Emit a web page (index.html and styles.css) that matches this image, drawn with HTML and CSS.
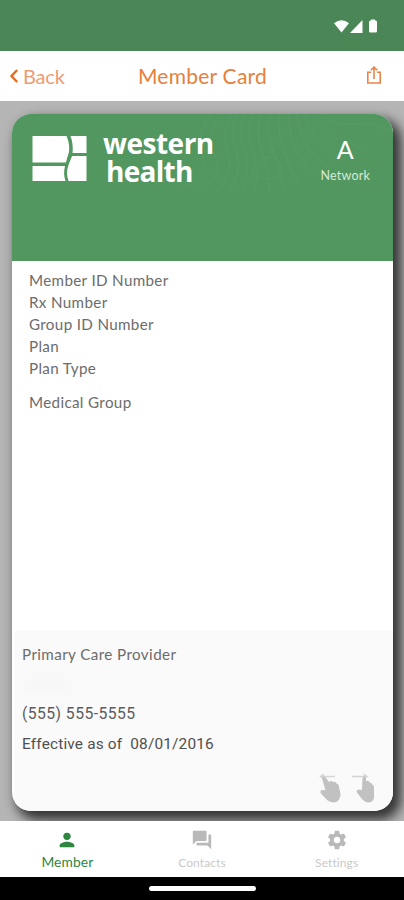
FILE: index.html
```
<!DOCTYPE html>
<html lang="en">
<head>
  <meta charset="UTF-8">
  <meta name="viewport" content="width=device-width, initial-scale=1">
  <title>Member Card</title>
  <link rel="stylesheet" href="styles.css">
</head>
<body>

<div class="status-bar">
  <svg width="46" height="16" viewBox="0 0 46 16" fill="#fff">
    <path d="M0 4.2Q7.5-1.5 15 4.2L7.5 13.5Z"/>
    <path d="M16 14L28.500 1V14Z"/>
    <path d="M35 3Q35 1.500 36.500 1.500H37V.5H41V1.500H41.500Q43 1.500 43 3V12Q43 13.500 41.500 13.500H36.500Q35 13.500 35 12Z"/>
  </svg>
</div>

<header class="nav-bar">
  <a class="back">
    <svg width="10" height="16" viewBox="0 0 10 16"><path d="M8.200 2L2.500 8L8.200 14" fill="none" stroke="#e66a20" stroke-width="2.400"/></svg>
    <span>Back</span>
  </a>
  <h1 class="title">Member Card</h1>
  <svg class="share" width="16" height="20" viewBox="0 0 16 20" fill="none" stroke="#e98448" stroke-width="1.600">
    <path d="M5 6.300H1.800V17H14.200V6.300H11M8 13V2M4.800 4.300L8 1.100L11.200 4.300"/>
  </svg>
</header>

<main class="screen">
  <div class="card">
    <div class="card-top">
      <!-- topographic lines -->
      <svg class="contours" width="220" height="80" viewBox="0 0 220 80" fill="none" stroke="#62a374" stroke-width=".7">
        <path d="M60 0Q48 20 56 38T44 78M66 0Q56 20 64 38T56 78M73 0Q64 20 72 36T70 78M81 0Q73 18 80 36T83 78M89 0Q83 18 89 34T98 78M98 0Q94 18 100 34T113 76M107 0Q106 18 110 32T127 70M116 0Q117 18 122 32T143 63M124 0Q128 18 134 30T158 54M132 0Q140 18 147 26T170 45M141 0Q150 15 158 20T190 34"/>
        <path d="M48 0Q32 24 43 42T24 78M38 0Q24 24 31 42T6 76M88 48Q103 35 109 51T93 65T88 48M150 0Q164 13 183 10T218 18"/>
      </svg>
      <div class="brand">
        <svg class="logo" width="56" height="48" viewBox="0 0 56 48" fill="#fff">
          <path d="M1.500 2H35.500Q39 10 38 18Q36 24 35 28.500H1.500Z"/>
          <path d="M39.500 2H55.500V19H41.500Q42.500 10 39.500 2Z"/>
          <path d="M1.500 32H34Q32 40 34.500 47H1.500Z"/>
          <path d="M41 22H55.500V47H37.500Q34.500 39 37.500 31Z"/>
        </svg>
        <div class="brand-name">western<br><span class="health">health</span></div>
      </div>
      <div class="network">
        <span class="network-letter">A</span>
        <span class="network-label">Network</span>
      </div>
    </div>

    <ul class="details">
      <li>Member ID Number</li>
      <li>Rx Number</li>
      <li>Group ID Number</li>
      <li>Plan</li>
      <li>Plan Type</li>
      <li class="medical">Medical Group</li>
    </ul>

    <div class="provider">
      <p class="provider-label">Primary Care Provider</p>
      <div class="provider-name"></div>
      <p class="phone">(555) 555-5555</p>
      <p class="effective">Effective as of &nbsp;08/01/2016</p>
      <div class="swipes">
        <svg width="24" height="32" viewBox="0 0 24 32">
          <path d="M1.500 4.500H16M5 2L1.500 4.500L5 7" fill="none" stroke="#d4d4d4" stroke-width="1.400"/>
          <path d="M3 6Q5 3.500 7.500 6.500L10 10Q12 8 14 10Q16.500 9 18 12Q20 12 20 15L21.500 22Q21.500 27 17.500 30Q12 31.500 8 28L1.500 21Q1 17.500 4.500 18L6.500 18.500Z" fill="#c1c1c1"/>
        </svg>
        <svg width="24" height="32" viewBox="0 0 24 32">
          <path d="M0 4.500H14.500M11.500 2L15 4.500L11.500 7" fill="none" stroke="#d4d4d4" stroke-width="1.400"/>
          <path d="M10.500 6Q12.500 3 14 6V9Q17 8 18 11Q20 10.500 20.500 13Q22 13 22 16V26Q21 30 17 30.500Q13 30.500 10 27L4.500 20Q4.500 17 7.500 17.500L10 18Z" fill="#c1c1c1"/>
        </svg>
      </div>
    </div>
  </div>
</main>

<nav class="tab-bar">
  <a class="tab active">
    <svg width="24" height="24" viewBox="0 0 24 24" fill="currentColor"><circle cx="12" cy="8" r="4"/><path d="M4 20V18C4 15.300 9.300 14 12 14S20 15.300 20 18V20Z"/></svg>
    <span>Member</span>
  </a>
  <a class="tab">
    <svg width="24" height="24" viewBox="0 0 24 24" fill="currentColor"><path d="M21 6H19V15H6V17C6 17.550 6.450 18 7 18H18L22 22V7C22 6.450 21.550 6 21 6ZM17 12V3C17 2.450 16.550 2 16 2H3C2.450 2 2 2.450 2 3V17L6 13H16C16.550 13 17 12.550 17 12Z"/></svg>
    <span>Contacts</span>
  </a>
  <a class="tab">
    <svg width="24" height="24" viewBox="0 0 24 24" fill="currentColor"><path d="M19.430 12.980c.04-.32.07-.64.07-.98s-.03-.66-.07-.98l2.110-1.650c.19-.15.24-.42.12-.64l-2-3.460c-.12-.22-.39-.3-.61-.22l-2.490 1c-.52-.4-1.080-.73-1.690-.98l-.38-2.650C14.460 2.180 14.250 2 14 2h-4c-.25 0-.46.18-.49.42l-.38 2.650c-.61.25-1.170.59-1.690.98l-2.490-1c-.23-.09-.49 0-.61.22l-2 3.460c-.13.22-.07.49.12.64l2.110 1.650c-.04.32-.07.65-.07.98s.03.66.07.98l-2.110 1.650c-.19.15-.24.42-.12.64l2 3.460c.12.22.39.3.61.22l2.490-1c.52.4 1.080.73 1.690.98l.38 2.650c.03.24.24.42.49.42h4c.25 0 .46-.18.49-.42l.38-2.650c.61-.25 1.170-.59 1.690-.98l2.490 1c.23.09.49 0 .61-.22l2-3.460c.12-.22.07-.49-.12-.64zM12 15.500a3.500 3.500 0 1 1 0-7 3.500 3.500 0 0 1 0 7z"/></svg>
    <span>Settings</span>
  </a>
</nav>

<div class="home-bar"><div class="home-pill"></div></div>

</body>
</html>
```
FILE: styles.css
```
* {
  box-sizing: border-box;
}

body {
  margin: 0;
  height: 900px;
  display: flex;
  flex-direction: column;
  font-family: Lato, "Open Sans", sans-serif;
  color: #6c6c6c;
  overflow: hidden;
}

.status-bar {
  height: 51px;
  background: #4b8656;
  display: flex;
  justify-content: flex-end;
  padding: 19px 24px 0 0;
}

.nav-bar {
  height: 50px;
  background: #fff;
  display: grid;
  grid-template-columns: 100px 1fr 86px;
  align-items: center;
  padding: 0 22px 0 9px;
}

.back {
  display: flex;
  align-items: center;
  gap: 4px;
  font-size: 20px;
  letter-spacing: -0.2px;
  color: #ed9c72;
}

.title {
  margin: 0;
  font-size: 21px;
  font-weight: normal;
  letter-spacing: 0.25px;
  line-height: 24px;
  text-align: center;
  color: #e6803c;
  white-space: nowrap;
}

.share {
  justify-self: end;
}

.screen {
  height: 720px;
  background: #b5b5b5;
  padding: 13px 11px 10px 12px;
  overflow: hidden;
}

.card {
  height: 697px;
  background: #fff;
  border-radius: 19px;
  overflow: hidden;
  display: flex;
  flex-direction: column;
  box-shadow: 6px 7px 12px 2px rgba(0, 0, 0, 0.72);
}

.card-top {
  position: relative;
  height: 147px;
  background: #539760;
  display: flex;
  justify-content: space-between;
  padding: 20px 23px 0 19px;
  color: #fff;
}

.contours {
  position: absolute;
  top: 0;
  left: 160px;
  opacity: 0.5;
}

.brand {
  display: flex;
  gap: 16px;
  position: relative;
}

.brand-name {
  font-family: "Open Sans", sans-serif;
  font-size: 28px;
  font-weight: bold;
  letter-spacing: -0.5px;
  line-height: 28px;
  margin-top: -5px;
}

.health {
  padding-left: 3px;
  letter-spacing: -0.7px;
}

.network {
  position: relative;
  display: flex;
  flex-direction: column;
  align-items: center;
}

.network-letter {
  font-size: 25px;
  line-height: 30px;
}

.network-label {
  font-size: 12.5px;
  letter-spacing: 0.2px;
  line-height: 23px;
  color: #d3ead5;
}

.details {
  flex: 1;
  margin: 0;
  padding: 8px 17px;
  list-style: none;
  font-size: 15.2px;
  letter-spacing: 0.34px;
  line-height: 22px;
}

.medical {
  margin-top: 12px;
}

.provider {
  position: relative;
  height: 181px;
  margin-left: 3px;
  padding: 13px 7px;
  background: #fafafa;
  font-size: 15.2px;
  letter-spacing: 0.4px;
}

.provider p {
  margin: 0;
  line-height: 22px;
}

.provider-name {
  width: 52px;
  height: 12px;
  margin: 14px 0 12px;
  background: #f7f7f7;
  filter: blur(5px);
}

.provider .phone {
  font-family: Roboto, sans-serif;
  font-size: 15.7px;
  letter-spacing: 0.45px;
  color: #5c5c5c;
}

.provider .effective {
  margin-top: 8px;
  font-family: Roboto, sans-serif;
  font-size: 15.4px;
  letter-spacing: 0.17px;
  color: #505050;
}

.swipes {
  position: absolute;
  right: 17px;
  bottom: 7px;
  display: flex;
  gap: 9px;
}

.tab-bar {
  height: 56px;
  background: #fff;
  display: grid;
  grid-template-columns: repeat(3, 1fr);
}

.tab {
  display: flex;
  flex-direction: column;
  align-items: center;
  padding-top: 8px;
  font-size: 12px;
  letter-spacing: 0.1px;
  line-height: 18px;
  color: #b9b9b9;
}

.tab svg {
  width: 22px;
  height: 22px;
  margin-bottom: 3px;
}

.tab span {
  color: #c9c9c9;
}

.tab.active,
.tab.active span {
  color: #2d8740;
}

.tab.active span {
  font-size: 13.8px;
  line-height: 16px;
}

.home-bar {
  height: 23px;
  background: #000;
  display: flex;
  justify-content: center;
  padding-top: 9px;
}

.home-pill {
  width: 107px;
  height: 5px;
  border-radius: 3px;
  background: #fff;
}
```
